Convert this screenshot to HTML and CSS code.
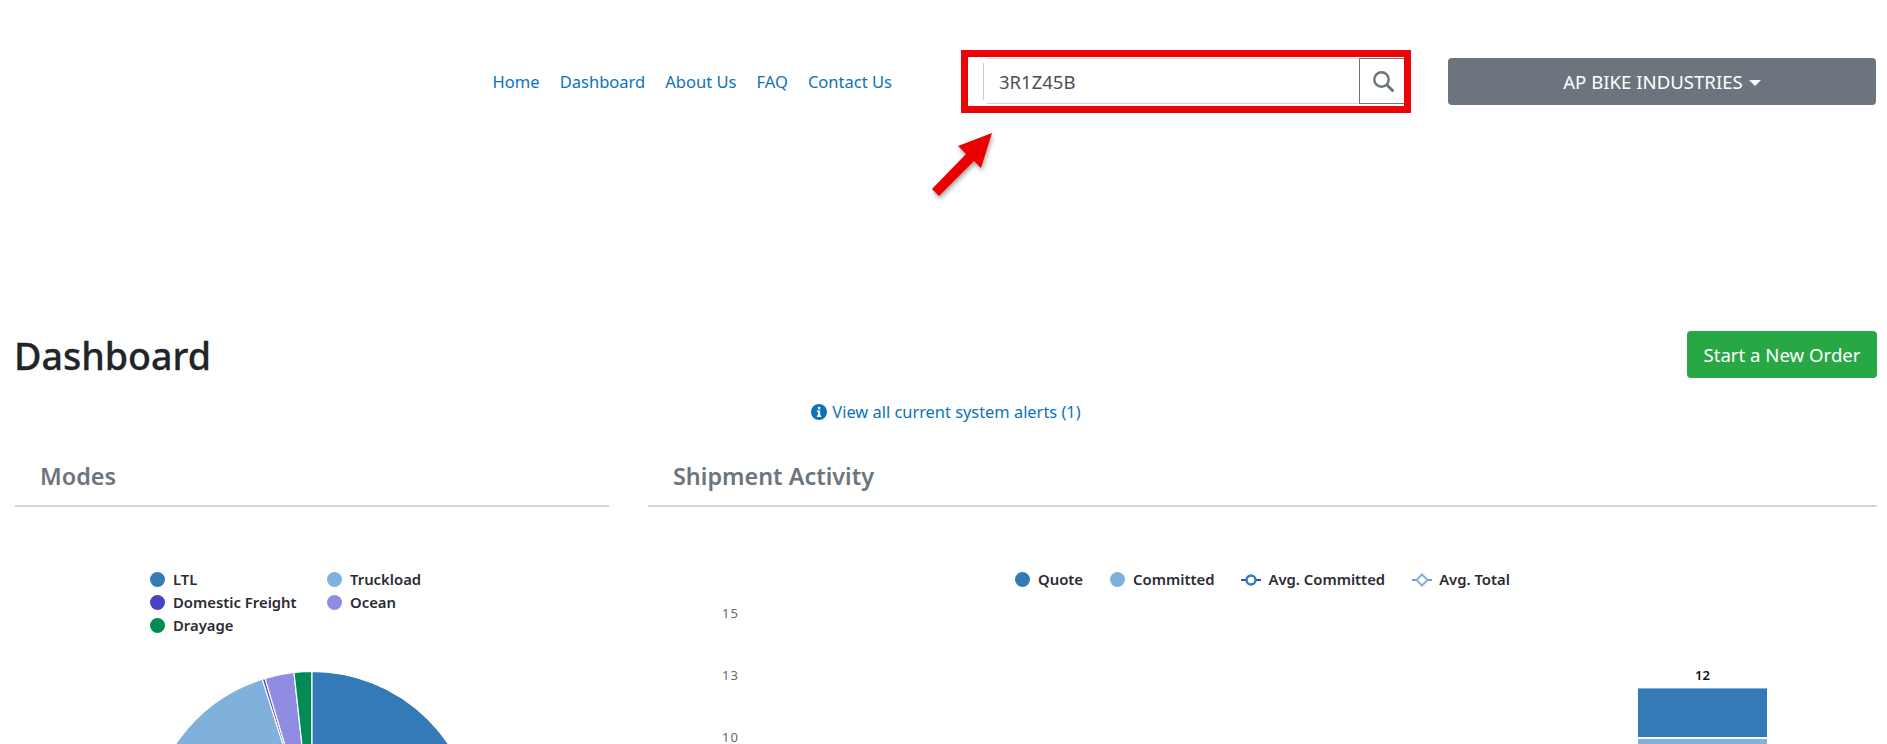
FILE: index.html
```html
<!DOCTYPE html>
<html lang="en">
<head>
<meta charset="utf-8">
<title>Dashboard</title>
<link rel="stylesheet" href="styles.css">
</head>
<body>
<header class="topbar">
  <nav class="nav">
    <a href="#">Home</a>
    <a href="#">Dashboard</a>
    <a href="#">About Us</a>
    <a href="#">FAQ</a>
    <a href="#">Contact Us</a>
  </nav>
  <form class="search">
    <div class="search-field">3R1Z45B</div>
    <button class="search-btn" type="button" aria-label="Search">
      <svg viewBox="0 0 24 24" width="24" height="24"><circle cx="10.5" cy="10.5" r="7.2" fill="none" stroke="#6c757d" stroke-width="2.4"/><path d="M16 16 L21.5 21.5" stroke="#6c757d" stroke-width="3" stroke-linecap="round"/></svg>
    </button>
    <span class="search-mark"></span>
    <svg class="search-arrow" viewBox="0 0 70 75" width="70" height="75"><defs><filter id="as" x="-20%" y="-20%" width="150%" height="150%"><feDropShadow dx="1" dy="3" stdDeviation="2" flood-color="#000" flood-opacity=".35"/></filter></defs><polygon points="4,60 38,25 30,17 64,4 53,39 46,32 11,67" fill="#ea0606" filter="url(#as)"/></svg>
  </form>
  <button class="account" type="button">AP BIKE INDUSTRIES<span class="caret"></span></button>
</header>

<main class="page">
  <div class="title-row">
    <h1>Dashboard</h1>
    <button class="new-order" type="button">Start a New Order</button>
  </div>
  <div class="alerts">
    <a href="#"><svg class="info" viewBox="0 0 16 16" width="16" height="16"><circle cx="8" cy="8" r="8" fill="#0c72bd"/><rect x="6.9" y="3" width="2.4" height="2.4" rx=".6" fill="#fff"/><path d="M5.9 6.6h3.3v5h1v1.4H5.9v-1.4h1v-3.6h-1z" fill="#fff"/></svg>View all current system alerts (1)</a>
  </div>
  <div class="columns">
    <section class="panel modes">
      <h2>Modes</h2>
      <div class="legend pie-legend">
        <span class="item"><i class="dot ltl"></i>LTL</span>
        <span class="item"><i class="dot truck"></i>Truckload</span>
        <span class="item"><i class="dot dom"></i>Domestic Freight</span>
        <span class="item"><i class="dot ocean"></i>Ocean</span>
        <span class="item"><i class="dot dray"></i>Drayage</span>
      </div>
      <svg class="pie" viewBox="0 0 330 330" width="330" height="330">
        <g stroke="#fff" stroke-width="1.2">
          <path fill="#7fb1dc" d="M165 165 L0.5 165 A164.5 164.5 0 0 1 115.3 8.2 Z"/>
          <path fill="#4a42c4" d="M165 165 L115.3 8.2 A164.5 164.5 0 0 1 118 7.4 Z"/>
          <path fill="#8f8ce2" d="M165 165 L118 7.4 A164.5 164.5 0 0 1 147 1.5 Z"/>
          <path fill="#008b54" d="M165 165 L147 1.5 A164.5 164.5 0 0 1 165 .5 Z"/>
          <path fill="#337ab7" d="M165 165 L165 .5 A164.5 164.5 0 0 1 165 329.5 A164.5 164.5 0 0 1 .5 165 Z"/>
        </g>
      </svg>
    </section>
    <section class="panel activity">
      <h2>Shipment Activity</h2>
      <div class="legend bar-legend">
        <span class="item"><i class="dot ltl"></i>Quote</span>
        <span class="item"><i class="dot truck"></i>Committed</span>
        <span class="item"><svg class="mark" viewBox="0 0 20 14" width="20" height="14"><path d="M0 7H20" stroke="#4a42c4" stroke-width="2"/><circle cx="10" cy="7" r="4.5" fill="#fff" stroke="#337ab7" stroke-width="2.4"/></svg>Avg. Committed</span>
        <span class="item"><svg class="mark" viewBox="0 0 20 14" width="20" height="14"><path d="M0 7H20" stroke="#8f8ce2" stroke-width="2"/><path d="M10 1.5L15.5 7 10 12.5 4.5 7Z" fill="#fff" stroke="#7fb1dc" stroke-width="2"/></svg>Avg. Total</span>
      </div>
      <div class="chart">
        <div class="axis">
          <span>15</span>
          <span>13</span>
          <span>10</span>
        </div>
        <div class="plot">
          <div class="bar">
            <span class="bar-value">12</span>
            <div class="seg seg-quote"></div>
            <div class="seg seg-committed"></div>
          </div>
        </div>
      </div>
    </section>
  </div>
</main>
</body>
</html>
```

FILE: styles.css
```css
* { box-sizing: border-box; }
html, body { margin: 0; height: 744px; overflow: hidden; background: #fff; }
body { font-family: "Noto Sans", "Open Sans", sans-serif; font-size: 16px; color: #212529; }
a { color: #0c72bd; text-decoration: none; }
h1, h2 { margin: 0; }

.topbar { display: flex; justify-content: flex-end; align-items: flex-start; height: 321px; padding: 58px 11px 0 0; }
.nav { display: flex; gap: 20px; height: 47px; align-items: center; margin-right: 92px; font-size: 16.55px; }

.search { position: relative; display: flex; width: 420px; height: 46px; margin-right: 44px; padding-left: 3px; }
.search-field { flex: 1; height: 46px; padding-left: 12px; line-height: 45px; font-size: 18.5px; color: #495057; border-top: 1.5px solid #cfd2de; border-bottom: 1.5px solid #cfd2de; position: relative; }
.search-field::before { content: ""; position: absolute; left: -4px; top: 4px; bottom: 3px; width: 1px; background: #ccc; }
.search-btn { width: 45px; height: 46px; padding: 0 0 0 2px; background: #fff; border: 1px solid #6c757d; border-right: 0; border-radius: 0; display: flex; align-items: center; justify-content: center; }
.search-mark { position: absolute; left: -23px; top: -8px; width: 450px; height: 63px; border: 7px solid #ea0606; pointer-events: none; }
.search-arrow { position: absolute; left: -56px; top: 71px; pointer-events: none; }

.account { width: 428px; height: 47px; background: #6c757d; color: #fff; border: 0; border-radius: 4px; font: inherit; font-size: 18.6px; }
.caret { display: inline-block; width: 0; height: 0; margin-left: 6px; vertical-align: 3px; border-top: 6px solid #fff; border-left: 6px solid transparent; border-right: 6px solid transparent; }

.page { height: 423px; overflow: hidden; padding: 10px 10px 0 15px; }
.title-row { display: flex; justify-content: space-between; align-items: center; height: 47px; }
h1 { margin-left: -1px; padding-top: 2px; font-size: 37.6px; font-weight: 500; line-height: 45px; color: #212529; -webkit-text-stroke: .3px #212529; }
.new-order { width: 190px; height: 47px; background: #28a745; color: #fff; border: 0; border-radius: 4px; font: inherit; font-size: 18.6px; }

.alerts { height: 68px; padding-top: 21px; text-align: center; font-size: 16.4px; line-height: 26px; }
.alerts a { display: inline-flex; align-items: center; gap: 5px; }

.columns { display: flex; gap: 39px; }
.panel h2 { height: 61px; padding: 15px 0 0 25px; font-size: 23.4px; font-weight: 600; line-height: 30px; color: #6c757d; border-bottom: 2px solid #d5d5d5; }
.modes { flex: 0 0 594px; position: relative; }
.activity { flex: 1; position: relative; }

.legend { font-size: 14.85px; font-weight: 600; line-height: 23px; color: #2b2b33; }
.item { display: inline-flex; align-items: center; white-space: nowrap; }
.dot { width: 15px; height: 15px; border-radius: 50%; margin-right: 8px; flex: none; }
.mark { margin-right: 7px; flex: none; }
.ltl { background: #337ab7; }
.truck { background: #7fb1dc; }
.dom { background: #4a42c4; }
.ocean { background: #8f8ce2; }
.dray { background: #008b54; }

.pie-legend { display: grid; grid-template-columns: 177px 100px; margin: 61px 0 0 135px; }
.pie { display: block; margin: 34px 0 0 132px; }

.bar-legend { display: flex; justify-content: center; gap: 27px; margin-top: 61px; }

.chart { display: flex; margin-top: 12px; }
.axis { width: 90px; padding-left: 74px; display: flex; flex-direction: column; gap: 42px; font-size: 13px; letter-spacing: 1px; line-height: 20px; color: #666; }
.plot { flex: 1; position: relative; height: 200px; }
.bar { position: absolute; left: 900px; top: 62px; width: 129px; }
.bar-value { display: block; height: 23px; text-align: center; font-size: 13px; font-weight: 600; line-height: 20px; color: #111; }
.seg-quote { height: 49px; background: #337ab7; border-top: 1px solid #7fb1dc; }
.seg-committed { height: 60px; margin-top: 2px; background: #7fb1dc; }
```
